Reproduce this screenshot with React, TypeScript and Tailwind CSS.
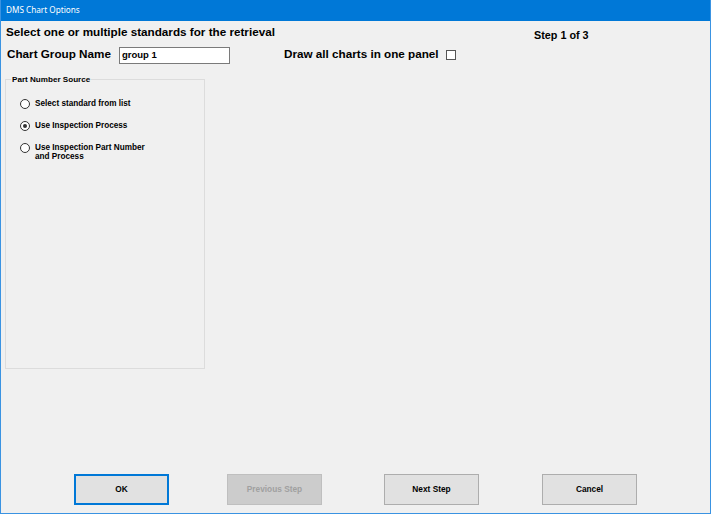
import React from "react";

const sans = "font-['Liberation_Sans',Arial,sans-serif]";

function Radio({ checked, children }: { checked?: boolean; children: React.ReactNode }) {
  return (
    <div className="flex items-start">
      <span className="ml-[14px] w-[10px] h-[10px] rounded-full border border-[#333333] bg-white flex items-center justify-center shrink-0">
        {checked && <span className="w-[4px] h-[4px] rounded-full bg-[#333333]" />}
      </span>
      <span className="ml-[5px] text-[8.2px] leading-[9px] font-bold text-black">{children}</span>
    </div>
  );
}

function Btn({ label, primary, disabled, className = "" }: { label: string; primary?: boolean; disabled?: boolean; className?: string }) {
  const look = disabled
    ? "bg-[#cccccc] border border-[#bfbfbf] text-[#a0a0a0]"
    : primary
    ? "bg-[#e1e1e1] border-2 border-[#0078d7] text-black"
    : "bg-[#e1e1e1] border border-[#adadad] text-black";
  return (
    <button
      disabled={disabled}
      className={`w-[95px] h-[31px] flex items-center justify-center text-[8.3px] font-bold ${look} ${className}`}
    >
      {label}
    </button>
  );
}

export default function App() {
  return (
    <div className={`w-[711px] h-[514px] flex flex-col bg-[#f0f0f0] border-x border-b border-[#3a93e2] ${sans}`}>
      <div className="h-[21px] bg-[#0078d7] flex items-center pl-[5px] shrink-0">
        <span className="font-['Noto_Sans',sans-serif] text-[8.2px] leading-none text-white">DMS Chart Options</span>
      </div>

      <div className="flex-1 flex flex-col">
        {/* heading row */}
        <div className="flex items-start h-[14px] mt-[4px] pl-[5px]">
          <div className="w-[528px] text-[11.7px] leading-[14px] font-bold text-black">
            Select one or multiple standards for the retrieval
          </div>
          <div className="mt-[3px] text-[10.8px] leading-[14px] font-bold text-black">Step 1 of 3</div>
        </div>

        {/* name row */}
        <div className="flex items-start mt-[8px] pl-[6px]">
          <div className="w-[112px] text-[11.7px] leading-[14px] font-bold text-black">Chart Group Name</div>
          <div className="w-[111px] h-[17px] bg-white border border-[#7a7a7a] flex items-center pl-[2px] text-[9.5px] font-bold text-black">
            group 1
          </div>
          <div className="ml-[54px] flex items-center">
            <span className="text-[11.7px] leading-[14px] font-bold text-black">Draw all charts in one panel</span>
            <span className="ml-[7px] mt-[1px] w-[10px] h-[10px] border border-[#555555] bg-white" />
          </div>
        </div>

        {/* group box */}
        <div className="relative mt-[15px] ml-[4px] w-[200px] h-[290px] border border-[#dcdcdc]">
          <span className="absolute top-[-5px] left-[5px] px-[1px] bg-[#f0f0f0] text-[8.1px] leading-[10px] font-bold text-black">
            Part Number Source
          </span>
          <div className="flex flex-col gap-[12px] pt-[19px]">
            <Radio>Select standard from list</Radio>
            <Radio checked>Use Inspection Process</Radio>
            <Radio>
              Use Inspection Part Number
              <br />
              and Process
            </Radio>
          </div>
        </div>

        <div className="flex-1" />

        {/* buttons */}
        <div className="flex pb-[8px]">
          <Btn label="OK" primary className="ml-[73px]" />
          <Btn label="Previous Step" disabled className="ml-[58px]" />
          <Btn label="Next Step" className="ml-[62px]" />
          <Btn label="Cancel" className="ml-[63px]" />
        </div>
      </div>
    </div>
  );
}
